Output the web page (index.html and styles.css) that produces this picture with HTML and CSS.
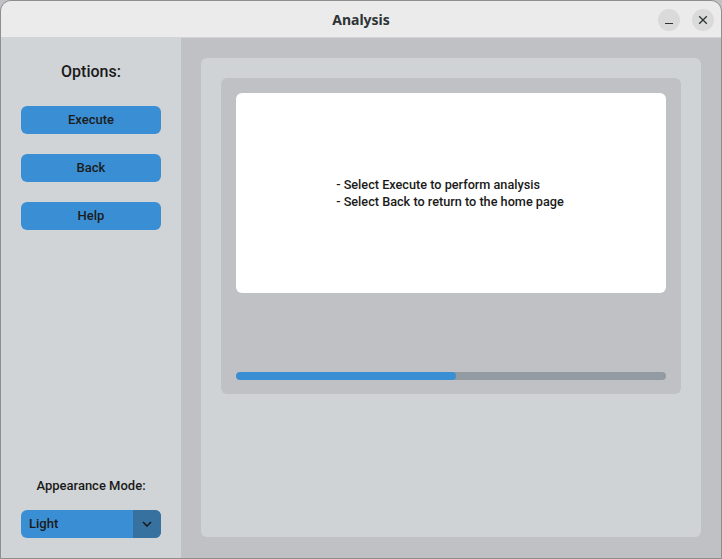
FILE: index.html
```html
<!DOCTYPE html>
<html>
<head>
<meta charset="utf-8">
<link rel="stylesheet" href="styles.css">
</head>
<body>
<div class="window">
  <div class="titlebar">
    <div class="title">Analysis</div>
    <div class="controls">
      <div class="wbtn"><svg width="10" height="10" viewBox="0 0 10 10"><path d="M1 8.5h8" stroke="#2e3436" stroke-width="1.2"/></svg></div>
      <div class="wbtn"><svg width="10" height="10" viewBox="0 0 10 10"><path d="M1.2 1.2l7.6 7.6M8.8 1.2l-7.6 7.6" stroke="#2e3436" stroke-width="1.3"/></svg></div>
    </div>
  </div>
  <div class="main">
    <div class="sidebar">
      <div class="options-label">Options:</div>
      <button class="btn">Execute</button>
      <button class="btn">Back</button>
      <button class="btn">Help</button>
      <div class="spacer"></div>
      <div class="mode-label">Appearance Mode:</div>
      <div class="menu">
        <span class="menu-text">Light</span>
        <span class="menu-arrow"><svg width="10" height="6" viewBox="0 0 10 6"><path d="M1 1l4 4 4-4" fill="none" stroke="#1a1a1a" stroke-width="1.6"/></svg></span>
      </div>
    </div>
    <div class="content">
      <div class="panel">
        <div class="card">
          <div class="textbox">
            <div class="msg">- Select Execute to perform analysis<br>- Select Back to return to the home page</div>
          </div>
          <div class="progress"><div class="fill"></div></div>
        </div>
      </div>
    </div>
  </div>
</div>
</body>
</html>
```
FILE: styles.css
```css
* { box-sizing: border-box; }
html, body { margin: 0; padding: 0; background: #c0c1c5; }
body { width: 722px; height: 559px; overflow: hidden; font-family: Roboto, "Liberation Sans", sans-serif; }
.window {
  width: 722px; height: 559px;
  border: 1px solid #8e8e8e;
  border-radius: 11px 11px 0 0;
  overflow: hidden;
  display: flex; flex-direction: column;
  background: #c0c1c5;
}
.titlebar {
  height: 37px; flex: none;
  background: #ebebeb;
  border-bottom: 1px solid #d4d4d4;
  position: relative;
  display: flex; align-items: center; justify-content: center;
}
.title { font-family: "Noto Sans", "DejaVu Sans", sans-serif; font-weight: 700; font-size: 14px; color: #2e3436; margin-top: 1px; }
.controls { position: absolute; right: 7px; top: 8px; display: flex; gap: 12px; }
.wbtn { width: 22px; height: 22px; border-radius: 50%; background: #dadada; display: flex; align-items: center; justify-content: center; }
.main { flex: 1; display: flex; min-height: 0; }
.sidebar {
  width: 180px; flex: none; background: #d1d4d7;
  display: flex; flex-direction: column; align-items: center;
  padding: 23px 20px 20px;
}
.options-label { font-size: 16px; font-weight: 500; color: #1a1a1a; height: 22px; line-height: 22px; margin-bottom: 23px; }
.btn {
  width: 140px; height: 28px; border: none; border-radius: 6px;
  background: #3a8ed3; color: #1c1c1c;
  font-family: Roboto, "Liberation Sans", sans-serif; font-size: 13px; font-weight: 500;
  margin-bottom: 20px; padding: 0 0 2px;
}
.spacer { flex: 1; }
.mode-label { font-size: 13px; font-weight: 500; color: #1a1a1a; line-height: 16px; margin-bottom: 16px; }
.menu {
  width: 140px; height: 28px; border-radius: 6px; overflow: hidden;
  display: flex; background: #3a8ed3;
}
.menu-text { flex: 1; font-size: 13px; font-weight: 500; color: #1a1a1a; line-height: 28px; padding-left: 8px; }
.menu-arrow { width: 28px; background: #36719f; display: flex; align-items: center; justify-content: center; }
.content { flex: 1; padding: 20px; }
.panel { height: 479px; background: #d0d3d6; border-radius: 6px; padding: 20px; }
.card { height: 316px; background: #c0c1c5; border-radius: 6px; padding: 15px 15px 0; }
.textbox { height: 200px; background: #ffffff; border-radius: 6px; display: flex; align-items: center; justify-content: center; }
.msg { font-size: 12.7px; font-weight: 500; color: #1a1a1a; line-height: 17px; text-align: left; margin-left: -2px; margin-top: 0; }
.progress { margin-top: 79px; height: 8px; border-radius: 4px; background: #939ba2; overflow: hidden; }
.fill { width: 220px; height: 8px; border-radius: 4px; background: #3a8ed3; }
```
